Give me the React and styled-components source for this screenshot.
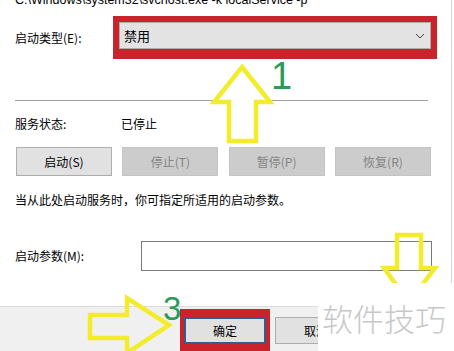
import React from 'react'
import styled, { createGlobalStyle } from 'styled-components'

const GlobalStyle = createGlobalStyle`
  html, body { margin: 0; padding: 0; background: #fff; }
  body {
    font-family: "Noto Sans CJK SC", "Liberation Sans", sans-serif;
    font-size: 12px;
    color: #000;
  }
`

const Chevron = () => (
  <svg width="10" height="6" viewBox="0 0 10 6">
    <path d="M1 1 L5 5 L9 1" fill="none" stroke="#444" strokeWidth="1" />
  </svg>
)

const Arrows = () => (
  <Overlay width="454" height="351" viewBox="0 0 454 351">
    <g fill="none" stroke="#f2ec2a" strokeWidth="4.5" strokeLinejoin="miter">
      <polygon
        points="242,67 270,102 256,102 256,141 229,141 229,102 214,102"
        fill="#fff"
      />
      <polygon points="397,235 421,235 421,268 435,268 409,302 384,268 397,268" />
      <polygon points="90,315 127,315 127,298 169,325 127,353 127,338 90,338" />
    </g>
  </Overlay>
)

export default function App() {
  return (
    <>
      <GlobalStyle />
      <Dialog>
        <Body>
          <PathLine>C:\Windows\system32\svchost.exe -k localService -p</PathLine>

          <TypeRow>
            <Label width={98}>启动类型(E):</Label>
            <Highlight>
              <Combo>
                <span>禁用</span>
                <Chevron />
              </Combo>
            </Highlight>
          </TypeRow>

          <Separator />

          <StatusRow>
            <Label width={106}>服务状态:</Label>
            <span>已停止</span>
          </StatusRow>

          <ButtonRow>
            <ActionButton>启动(S)</ActionButton>
            <ActionButton disabled>停止(T)</ActionButton>
            <ActionButton disabled>暂停(P)</ActionButton>
            <ActionButton disabled>恢复(R)</ActionButton>
          </ButtonRow>

          <Hint>当从此处启动服务时，你可指定所适用的启动参数。</Hint>

          <ParamRow>
            <Label width={126}>启动参数(M):</Label>
            <ParamInput />
          </ParamRow>
        </Body>

        <Footer>
          <FocusFrame>
            <DialogButton primary>确定</DialogButton>
          </FocusFrame>
          <DialogButton>取消</DialogButton>
        </Footer>

        <Arrows />
        <StepNumber style={{ left: 271, top: 57 }} size={38}>1</StepNumber>
        <StepNumber style={{ left: 163, top: 292 }} size={33}>3</StepNumber>

        <Watermark>软件技巧</Watermark>
      </Dialog>
    </>
  )
}

const Dialog = styled.div`
  position: relative;
  width: 454px;
  height: 351px;
  overflow: hidden;
  background: #fff;
  display: flex;
  flex-direction: column;
`
const Body = styled.div`
  box-sizing: border-box;
  width: 452px;
  height: 306px;
  flex: 0 0 306px;
  padding-left: 15px;
  border-right: 1px solid #d6d6d6;
`
const PathLine = styled.div`
  margin-top: -7px;
  height: 14px;
  line-height: 14px;
  font-family: "Liberation Sans", sans-serif;
  font-size: 12.5px;
  white-space: nowrap;
`
const Label = styled.span`
  flex: 0 0 ${p => p.width}px;
  line-height: 16px;
`
const TypeRow = styled.div`
  display: flex;
  align-items: center;
  margin-top: 9px;
`
const Highlight = styled.div`
  width: 324px;
  box-sizing: border-box;
  border: 6px solid #c9242c;
  border-bottom-width: 10px;
`
const Combo = styled.div`
  box-sizing: border-box;
  height: 27px;
  display: flex;
  align-items: center;
  justify-content: space-between;
  padding: 0 5px 0 4px;
  background: #e3e3e3;
  border: 1px solid #acacac;
  font-size: 13px;
`
const Separator = styled.div`
  margin-top: 41px;
  width: 413px;
  height: 1px;
  background: #a0a0a0;
`
const StatusRow = styled.div`
  display: flex;
  margin-top: 15px;
  line-height: 16px;
`
const ButtonRow = styled.div`
  display: flex;
  justify-content: space-between;
  width: 415px;
  margin: 15px 0 0 1px;
`
const ActionButton = styled.div`
  box-sizing: border-box;
  width: 96px;
  height: 29px;
  display: flex;
  align-items: center;
  justify-content: center;
  background: ${p => (p.disabled ? '#cccccc' : '#e1e1e1')};
  border: 1px solid ${p => (p.disabled ? '#c4c4c4' : '#adadad')};
  color: ${p => (p.disabled ? '#848484' : '#000')};
`
const Hint = styled.div`
  margin-top: 16px;
  line-height: 16px;
`
const ParamRow = styled.div`
  display: flex;
  align-items: center;
  margin-top: 33px;
`
const ParamInput = styled.div`
  box-sizing: border-box;
  width: 291px;
  height: 30px;
  border: 1px solid #7a7a7a;
  background: #fff;
`
const Footer = styled.div`
  flex: 1;
  display: flex;
  align-items: flex-start;
  padding: 2px 0 0 180px;
  background: #f0f0f0;
  border-top: 1px solid #dcdcdc;
`
const FocusFrame = styled.div`
  border: 4px solid #c9242c;
  border-top-width: 8px;
  border-bottom-width: 8px;
`
const DialogButton = styled.div`
  box-sizing: border-box;
  width: 82px;
  height: 27px;
  display: flex;
  align-items: center;
  justify-content: center;
  background: #e1e1e1;
  border: ${p => (p.primary ? '2px solid #2f5d8e' : '1px solid #adadad')};
  margin: ${p => (p.primary ? '0' : '8px 0 0 5px')};
`
const Overlay = styled.svg`
  position: absolute;
  left: 0;
  top: 0;
  pointer-events: none;
`
const StepNumber = styled.span`
  position: absolute;
  font-family: "Liberation Sans", sans-serif;
  font-size: ${p => p.size}px;
  line-height: 1;
  color: #2b9a5a;
`
const Watermark = styled.div`
  position: absolute;
  left: 318px;
  top: 283px;
  right: 0;
  bottom: 0;
  display: flex;
  align-items: center;
  padding-left: 4px;
  background: #fff;
  color: #c8c8c8;
  font-size: 31px;
  font-weight: 300;
`
